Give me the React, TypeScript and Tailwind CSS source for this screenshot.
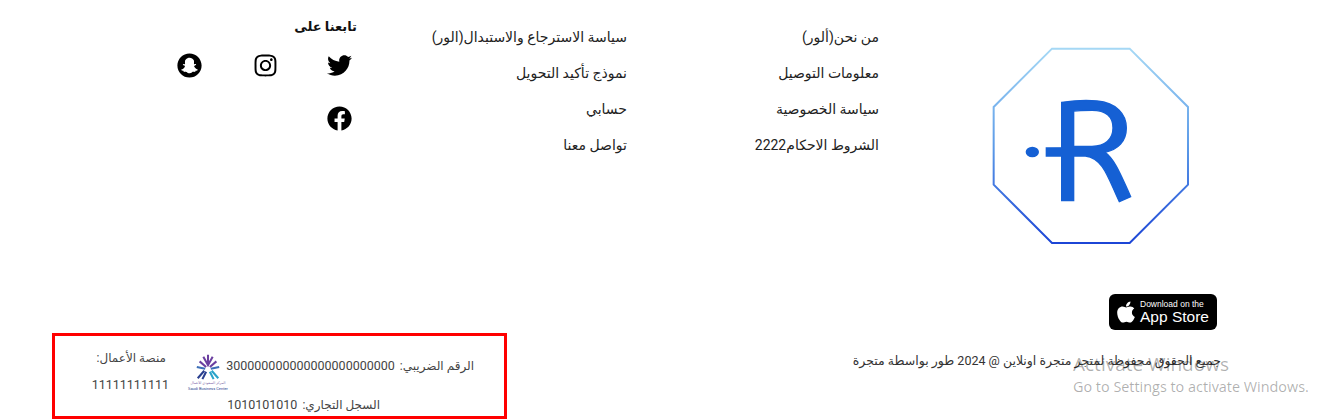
import React from 'react';
import { FaApple, FaFacebook, FaInstagram, FaSnapchat, FaTwitter } from 'react-icons/fa';

const col1 = ['من نحن(ألور)', 'معلومات التوصيل', 'سياسة الخصوصية', 'الشروط الاحكام2222'];
const col2 = ['سياسة الاسترجاع والاستبدال(الور)', 'نموذج تأكيد التحويل', 'حسابي', 'تواصل معنا'];

const LinkColumn: React.FC<{ items: string[]; className: string }> = ({ items, className }) => (
  <ul className={`flex flex-col pt-[19px] ${className}`}>
    {items.map(item => (
      <li key={item} className="h-[36px] leading-[36px] text-[14px] text-[#222] whitespace-nowrap">
        {item}
      </li>
    ))}
  </ul>
);

const BrandLogo = () => (
  <svg viewBox="95 52 594 594" className="w-[198px] h-[198px]">
    <defs>
      <linearGradient id="octa" x1="0" y1="0" x2="0" y2="1">
        <stop offset="0" stopColor="#a5d8f5" />
        <stop offset="0.5" stopColor="#5c9be8" />
        <stop offset="1" stopColor="#1c45d6" />
      </linearGradient>
    </defs>
    <polygon
      points="275,57 508,57 683,232 683,465 508,640 275,640 100,465 100,232"
      fill="none"
      stroke="url(#octa)"
      strokeWidth="6"
    />
    <path
      fillRule="evenodd"
      fill="#1560d4"
      stroke="#1560d4"
      strokeWidth="4"
      d="M304 218 C340 213 380 211 410 214 C468 220 498 252 498 295 C498 335 473 360 434 368 C458 385 473 415 511 501 L477 516 C445 450 430 385 375 379 L340 379 L340 513 L304 513 L304 379 L258 379 L258 355 L304 354 Z M340 244 L340 350 L395 350 C433 350 458 330 458 295 C458 260 435 242 395 242 C375 242 355 242 340 244 Z"
    />
    <ellipse cx="216" cy="367" rx="20" ry="16" fill="#1560d4" />
  </svg>
);

const BusinessCenterLogo = () => (
  <div className="w-[40px] h-[40px] flex flex-col items-center shrink-0" dir="ltr">
    <svg viewBox="0 0 40 30" className="w-[40px] h-[28px] shrink-0">
      <g fill="none" strokeWidth="2.2">
        <path d="M20 2 L20 12 M15 4 L20 13 L25 4 M11 9 L18 15 M29 9 L22 15" stroke="#6b3fa0" />
        <path d="M8 15 L17 17 M32 15 L23 17" stroke="#3d6fb8" />
        <path d="M9 27 L16 19 M14 28 L18 20" stroke="#2a3f8f" />
        <path d="M31 27 L24 19 M26 28 L22 20" stroke="#2aa3c9" />
      </g>
    </svg>
    <span className="text-[3.5px] leading-[5px] text-[#7a6aa8] whitespace-nowrap">المركز السعودي للأعمال</span>
    <span className="text-[4px] leading-[5px] text-[#2a3f8f] whitespace-nowrap">Saudi Business Center</span>
  </div>
);

export default function App() {
  return (
    <div
      dir="rtl"
      className="relative w-[1340px] h-[420px] overflow-hidden bg-white font-['Roboto','DejaVu_Sans',sans-serif]"
    >
      <div className="flex flex-col pr-[150px] h-full">
        <div className="flex h-[294px]">
          <div className="w-[198px] pt-[47px] shrink-0">
            <BrandLogo />
          </div>
          <LinkColumn items={col1} className="w-[252px] mr-[113px]" />
          <LinkColumn items={col2} className="w-[270px]" />
          <div className="pt-[18px]">
            <h4 className="text-[13px] leading-[18px] font-bold text-[#111] pb-[17px]">تابعنا على</h4>
            <div className="grid grid-cols-[74px_76px_25px] gap-y-[28px] text-black text-[25px] pr-[5px]">
              <FaTwitter />
              <FaInstagram />
              <FaSnapchat />
              <FaFacebook />
            </div>
          </div>
        </div>

        <div className="flex justify-between items-end flex-1 -mr-[31px] pl-[52px] pb-[1px]">
          <div className="flex flex-col items-start self-start">
            <div
              dir="ltr"
              className="mr-[4px] w-[108px] h-[36px] rounded-[6px] bg-black text-white flex items-center pl-[5px] gap-[2px] font-['Liberation_Sans',sans-serif]"
            >
              <FaApple className="text-[24px]" />
              <div className="flex flex-col">
                <span className="text-[8.5px] leading-[9px]">Download on the</span>
                <span className="text-[15.5px] leading-[15px]">App Store</span>
              </div>
            </div>
            <p className="mt-[23px] text-[12.5px] leading-[16px] text-[#333] whitespace-nowrap">
              جميع الحقوق محفوظة لمتجر متجرة اونلاين @ 2024 طور بواسطة متجرة
            </p>
          </div>

          <div className="w-[455px] h-[86px] border-[3px] border-[#f00] flex text-[12px] text-[#444]">
            <div className="w-[276px] shrink-0 pt-[21px] flex flex-col gap-[21px]">
              <div className="leading-[18px] whitespace-nowrap pr-[30px]">
                الرقم الضريبي: <span className="mr-[2px] text-[12.5px]">300000000000000000000000</span>
              </div>
              <div className="leading-[18px] whitespace-nowrap pr-[124px]">
                السجل التجاري: <span className="mr-[2px] text-[12.5px]">1010101010</span>
              </div>
            </div>
            <div className="pt-[17px]">
              <BusinessCenterLogo />
            </div>
            <div className="mr-[19px] pt-[13px] flex flex-col gap-[9px]">
              <div className="leading-[18px] whitespace-nowrap pr-[3px]">منصة الأعمال:</div>
              <div className="leading-[18px] text-[12.5px]">11111111111</div>
            </div>
          </div>
        </div>
      </div>

      {/* windows watermark over the page */}
      <div
        dir="ltr"
        className="absolute left-[1073px] top-[352px] text-[#00000050] font-['Open_Sans',sans-serif] pointer-events-none"
      >
        <div className="text-[19px] leading-[24px] whitespace-nowrap">Activate Windows</div>
        <div className="text-[14.4px] leading-[22px] whitespace-nowrap">Go to Settings to activate Windows.</div>
      </div>
    </div>
  );
}
